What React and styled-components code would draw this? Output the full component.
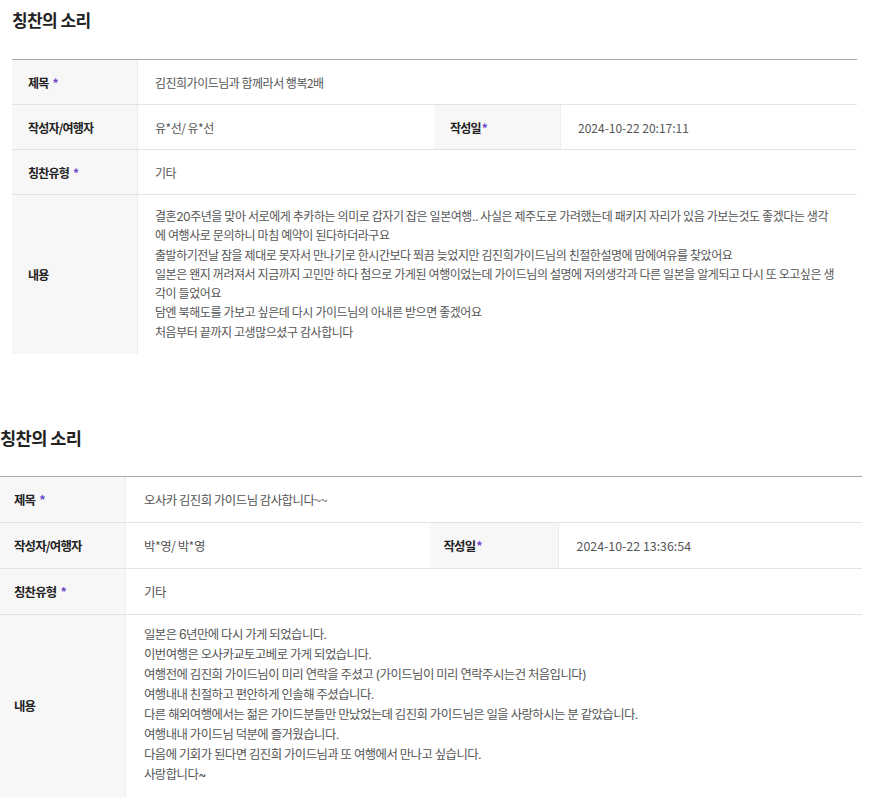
import styled, { createGlobalStyle } from "styled-components";

const GlobalStyle = createGlobalStyle`
  html, body {
    margin: 0;
    padding: 0;
    background: #fff;
  }
  body {
    font-family: "Noto Sans CJK KR", "Noto Sans", sans-serif;
    color: #333;
  }
`;

const Page = styled.div`
  width: 870px;
  padding-top: 7px;
`;

const Section = styled.section`
  margin-left: ${(p) => p.$inset}px;
  width: ${(p) => p.$width}px;
  margin-top: ${(p) => p.$top}px;
`;

const Title = styled.h2`
  margin: 0;
  font-size: ${(p) => p.$fs}px;
  line-height: 26px;
  font-weight: 700;
  color: #222;
  letter-spacing: -0.6px;
`;

const Table = styled.div`
  margin-top: ${(p) => p.$gap}px;
  border-top: 1px solid #a8a8a8;
  font-size: ${(p) => p.$fs}px;
`;

const Row = styled.div`
  display: grid;
  grid-template-columns: ${(p) => (p.$split ? `126px 1fr ${p.$label2}px 1fr` : "126px 1fr")};
  min-height: ${(p) => p.$h}px;
  border-bottom: ${(p) => (p.$last ? "none" : "1px solid #e3e3e3")};
`;

const Label = styled.div`
  display: flex;
  align-items: center;
  padding-left: ${(p) => p.$pad}px;
  background: #f7f7f7;
  border-right: 1px solid #ececec;
  font-weight: 700;
  color: #222;
  letter-spacing: -0.8px;
`;

const Star = styled.span`
  color: #6a46c8;
  margin-left: ${(p) => (p.$tight ? 1 : 4)}px;
`;

const Value = styled.div`
  display: flex;
  align-items: center;
  padding: 0 18px 0 ${(p) => p.$pad}px;
  color: #555;
  letter-spacing: ${(p) => (p.$plain ? "0" : "-0.5px")};
`;

const Body = styled.div`
  padding: ${(p) => p.$padTop}px 19px 12px ${(p) => p.$pad}px;
  font-family: "Inter", "Noto Sans CJK KR", sans-serif;
  color: #555;
  line-height: ${(p) => p.$lh}px;
  letter-spacing: ${(p) => p.$ls}px;
  word-spacing: -0.5px;
`;

const Line = styled.div`
  white-space: nowrap;
`;

const reviews = [
  {
    id: 1,
    inset: 12,
    width: 845,
    top: 0,
    titleFs: 17,
    gap: 26,
    fs: 12,
    ls: -0.45,
    rowH: 44,
    lh: 19.3,
    padTop: 12,
    labelPad: 16,
    valuePad: 17,
    label2: 127,
    subject: "김진희가이드님과 함께라서 행복2배",
    author: "유*선/ 유*선",
    date: "2024-10-22 20:17:11",
    kind: "기타",
    body: [
      "결혼20주년을 맞아 서로에게 추카하는 의미로 갑자기 잡은 일본여행.. 사실은 제주도로 가려했는데 패키지 자리가 있음 가보는것도 좋겠다는 생각",
      "에 여행사로 문의하니 마침 예약이 된다하더라구요",
      "출발하기전날 잠을 제대로 못자서 만나기로 한시간보다 쬐끔 늦었지만 김진희가이드님의 친절한설명에 맘에여유를 찾았어요",
      "일본은 왠지 꺼려져서 지금까지 고민만 하다 첨으로 가게된 여행이었는데 가이드님의 설명에 저의생각과 다른 일본을 알게되고 다시 또 오고싶은 생",
      "각이 들었어요",
      "담엔 북해도를 가보고 싶은데 다시 가이드님의 아내른 받으면 좋겠어요",
      "처음부터 끝까지 고생많으셨구 감사합니다",
    ],
  },
  {
    id: 2,
    inset: 0,
    width: 862,
    top: 71,
    titleFs: 17.6,
    gap: 25,
    fs: 12.4,
    ls: -0.55,
    rowH: 45,
    lh: 20,
    padTop: 10,
    labelPad: 14,
    valuePad: 18,
    label2: 129,
    subject: "오사카 김진희 가이드님 감사합니다~~",
    author: "박*영/ 박*영",
    date: "2024-10-22 13:36:54",
    kind: "기타",
    body: [
      "일본은 6년만에 다시 가게 되었습니다.",
      "이번여행은 오사카교토고베로 가게 되었습니다.",
      "여행전에 김진희 가이드님이 미리 연락을 주셨고 (가이드님이 미리 연락주시는건 처음입니다)",
      "여행내내 친절하고 편안하게 인솔해 주셨습니다.",
      "다른 해외여행에서는 젊은 가이드분들만 만났었는데 김진희 가이드님은 일을 사랑하시는 분 같았습니다.",
      "여행내내 가이드님 덕분에 즐거웠습니다.",
      "다음에 기회가 된다면 김진희 가이드님과 또 여행에서 만나고 싶습니다.",
      "사랑합니다~",
    ],
  },
];

const PraiseCard = ({ r }) => (
  <Section $inset={r.inset} $width={r.width} $top={r.top}>
    <Title $fs={r.titleFs}>칭찬의 소리</Title>
    <Table $gap={r.gap} $fs={r.fs}>
      <Row $h={r.rowH}>
        <Label $pad={r.labelPad}>제목<Star>*</Star></Label>
        <Value $pad={r.valuePad}>{r.subject}</Value>
      </Row>
      <Row $h={r.rowH} $split $label2={r.label2}>
        <Label $pad={r.labelPad}>작성자/여행자</Label>
        <Value $pad={r.valuePad}>{r.author}</Value>
        <Label $pad={r.labelPad}>작성일<Star $tight>*</Star></Label>
        <Value $pad={r.valuePad} $plain>{r.date}</Value>
      </Row>
      <Row $h={r.rowH}>
        <Label $pad={r.labelPad}>칭찬유형<Star>*</Star></Label>
        <Value $pad={r.valuePad}>{r.kind}</Value>
      </Row>
      <Row $last>
        <Label $pad={r.labelPad}>내용</Label>
        <Body $pad={r.valuePad} $padTop={r.padTop} $lh={r.lh} $ls={r.ls}>
          {r.body.map((line, i) => (
            <Line key={i}>{line}</Line>
          ))}
        </Body>
      </Row>
    </Table>
  </Section>
);

const App = () => (
  <>
    <GlobalStyle />
    <Page>
      {reviews.map((r) => (
        <PraiseCard key={r.id} r={r} />
      ))}
    </Page>
  </>
);

export default App;
